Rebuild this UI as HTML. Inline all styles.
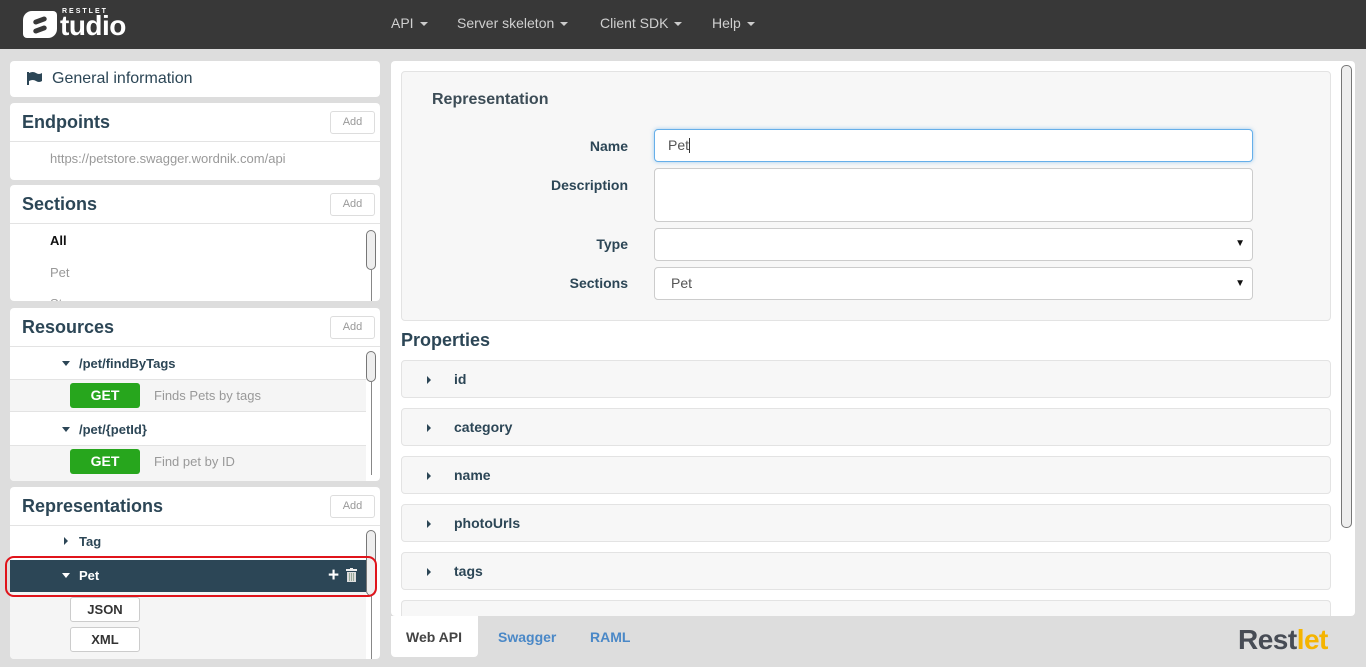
<!DOCTYPE html>
<html><head><meta charset="utf-8"><style>
*{box-sizing:border-box;margin:0;padding:0}
body{width:1366px;height:667px;overflow:hidden;background:#dddddd;font-family:"Liberation Sans",Arial,sans-serif;position:relative}
.a{position:absolute}
.nav{left:0;top:0;width:1366px;height:49px;background:#383838}
.nav .m{top:15px;color:#d0d0d0;font-size:14px}
.car{display:inline-block;width:0;height:0;border-left:4px solid transparent;border-right:4px solid transparent;border-top:4px solid #ccc;vertical-align:middle;margin-left:6px}
.pan{background:#fff;border-radius:4px;left:10px;width:370px;overflow:hidden}
.ph{position:absolute;left:12px;top:9px;font-size:18px;font-weight:bold;color:#2c4656}
.add{position:absolute;right:5px;top:8px;width:45px;height:23px;border:1px solid #ddd;border-radius:3px;color:#999;font-size:11px;text-align:center;line-height:21px}
.hr{position:absolute;left:0;right:0;height:1px;background:#e3e3e3}
.sb{position:absolute;width:10px;border:1px solid #777;border-radius:5px;background:#eee}
.sl{position:absolute;width:1px;background:#888}
.tri{display:inline-block;width:0;height:0;border-top:4px solid transparent;border-bottom:4px solid transparent;border-left:4px solid #2c4656}
.trid{display:inline-block;width:0;height:0;border-left:4px solid transparent;border-right:4px solid transparent;border-top:5px solid #2c4656}
.get{position:absolute;left:60px;width:70px;height:25px;background:#27a61d;border-radius:3px;color:#fff;font-weight:bold;font-size:14px;text-align:center;line-height:25px}
.lbl{position:absolute;font-size:14px;font-weight:bold;color:#2c4656;text-align:right;width:200px;left:428px}
.inp{position:absolute;left:654px;width:599px;background:#fff;border:1px solid #ccc;border-radius:4px;font-size:14px;color:#555;padding-left:13px}
.prow{position:absolute;left:401px;width:930px;height:38px;background:#f7f7f7;border:1px solid #e3e3e3;border-radius:4px}
.prow .tri{position:absolute;left:25px;top:15px}
.prow span{position:absolute;left:52px;top:10px;font-size:14px;font-weight:bold;color:#2c4656}
.fmt{position:absolute;left:60px;width:70px;height:25px;border:1px solid #ccc;border-radius:3px;background:#fff;text-align:center;line-height:23px;font-size:13px;font-weight:bold;color:#333}
</style></head><body>
<div class="a nav">
  <div class="a" style="left:23px;top:11px;width:34px;height:27px;background:#fff;border-radius:9px 4px 9px 4px"></div>
  <div class="a" style="left:33px;top:18px;width:14px;height:5px;background:#383838;border-radius:3px;transform:rotate(-20deg)"></div>
  <div class="a" style="left:33px;top:27px;width:14px;height:5px;background:#383838;border-radius:3px;transform:rotate(-20deg)"></div>
  <div class="a" style="left:62px;top:8px;color:#fff;font-size:7px;font-weight:bold;letter-spacing:2px">RESTLET</div>
  <div class="a" style="left:60px;top:10px;color:#fff;font-size:28px;font-weight:bold;letter-spacing:-0.5px">tudio</div>
  <div class="a m" style="left:391px">API<span class="car"></span></div>
  <div class="a m" style="left:457px">Server skeleton<span class="car"></span></div>
  <div class="a m" style="left:600px">Client SDK<span class="car"></span></div>
  <div class="a m" style="left:712px">Help<span class="car"></span></div>
</div>

<div class="a pan" style="top:61px;height:36px">
  <svg class="a" style="left:17px;top:11px" width="16" height="13" viewBox="0 0 16 13"><rect x="0" y="0" width="2" height="13" fill="#2c4656"/><path d="M2 1 Q6 -1 9 1 T15 1 V9 Q12 11 9 9 T2 9Z" fill="#2c4656"/></svg>
  <div class="a" style="left:42px;top:9px;font-size:16px;color:#2c4656">General information</div>
</div>

<div class="a pan" style="top:103px;height:77px">
  <div class="ph">Endpoints</div><div class="add">Add</div>
  <div class="hr" style="top:38px"></div>
  <div class="a" style="left:40px;top:48px;font-size:13px;color:#999">https://petstore.swagger.wordnik.com/api</div>
</div>

<div class="a pan" style="top:185px;height:116px">
  <div class="ph">Sections</div><div class="add">Add</div>
  <div class="hr" style="top:38px"></div>
  <div class="a" style="left:40px;top:48px;font-size:13px;font-weight:bold;color:#111">All</div>
  <div class="a" style="left:40px;top:80px;font-size:13px;color:#999">Pet</div>
  <div class="a" style="left:40px;top:111px;font-size:13px;color:#999">St</div>
  <div class="sb" style="left:356px;top:45px;height:40px"></div>
  <div class="sl" style="left:361px;top:85px;height:31px"></div>
</div>

<div class="a pan" style="top:308px;height:173px">
  <div class="ph">Resources</div><div class="add">Add</div>
  <div class="hr" style="top:38px"></div>
  <div class="a" style="left:52px;top:48px;font-size:13px;font-weight:bold;color:#2c4656"><span class="trid" style="margin-right:9px;vertical-align:2px"></span>/pet/findByTags</div>
  <div class="a" style="left:0;top:71px;width:356px;height:33px;background:#f5f5f5;border-top:1px solid #e3e3e3;border-bottom:1px solid #e3e3e3"></div>
  <div class="get" style="top:75px">GET</div>
  <div class="a" style="left:144px;top:80px;font-size:13px;color:#999">Finds Pets by tags</div>
  <div class="a" style="left:52px;top:114px;font-size:13px;font-weight:bold;color:#2c4656"><span class="trid" style="margin-right:9px;vertical-align:2px"></span>/pet/{petId}</div>
  <div class="a" style="left:0;top:137px;width:356px;height:36px;background:#f5f5f5;border-top:1px solid #e3e3e3"></div>
  <div class="get" style="top:141px">GET</div>
  <div class="a" style="left:144px;top:146px;font-size:13px;color:#999">Find pet by ID</div>
  <div class="sb" style="left:356px;top:43px;height:31px"></div>
  <div class="sl" style="left:361px;top:74px;height:93px"></div>
</div>

<div class="a pan" style="top:487px;height:172px">
  <div class="ph">Representations</div><div class="add">Add</div>
  <div class="hr" style="top:38px"></div>
  <div class="a" style="left:54px;top:47px;font-size:13px;font-weight:bold;color:#2c4656"><span class="tri" style="margin-right:11px;vertical-align:1px"></span>Tag</div>
  <div class="a" style="left:0;top:73px;width:356px;height:32px;background:#2c4656"></div>
  <div class="a" style="left:52px;top:81px;font-size:13px;font-weight:bold;color:#fff"><span class="trid" style="border-top-color:#fff;margin-right:9px;vertical-align:2px"></span>Pet</div>
  <div class="a" style="left:318px;top:78px;color:#fff;font-size:19px;font-weight:bold">+</div>
  <svg class="a" style="left:336px;top:81px" width="11" height="14" viewBox="0 0 11 14"><rect x="0" y="1" width="11" height="2" fill="#eee"/><rect x="4" y="0" width="3" height="2" fill="#eee"/><rect x="1" y="4" width="9" height="10" fill="#ddd"/><rect x="3" y="5" width="1" height="8" fill="#9a9"/><rect x="5" y="5" width="1" height="8" fill="#9a9"/><rect x="7" y="5" width="1" height="8" fill="#9a9"/></svg>
  <div class="a" style="left:0;top:105px;width:356px;height:67px;background:#f5f5f5"></div>
  <div class="fmt" style="top:110px">JSON</div>
  <div class="fmt" style="top:140px">XML</div>
  <div class="sb" style="left:356px;top:43px;height:66px"></div>
  <div class="sl" style="left:361px;top:109px;height:63px"></div>
</div>
<div class="a" style="left:5px;top:556px;width:372px;height:41px;border:2px solid #e0141b;border-radius:9px"></div>

<div class="a" style="left:391px;top:61px;width:964px;height:555px;background:#fff;border-radius:4px"></div>
<div class="a" style="left:401px;top:71px;width:930px;height:250px;background:#f7f7f7;border:1px solid #e3e3e3;border-radius:4px"></div>
<div class="a" style="left:432px;top:91px;font-size:16px;font-weight:bold;color:#3c4c56">Representation</div>
<div class="lbl" style="top:138px">Name</div>
<div class="lbl" style="top:177px">Description</div>
<div class="lbl" style="top:236px">Type</div>
<div class="lbl" style="top:275px">Sections</div>
<div class="inp" style="top:129px;height:33px;line-height:31px;border-color:#66afe9;box-shadow:0 0 4px rgba(102,175,233,.6)">Pet<span style="display:inline-block;width:1px;height:15px;background:#333;vertical-align:-3px"></span></div>
<div class="inp" style="top:168px;height:54px"></div>
<div class="inp" style="top:228px;height:33px"><span class="a" style="right:7px;top:9px;font-size:10px;color:#111">▼</span></div>
<div class="inp" style="top:267px;height:33px;line-height:31px;padding-left:16px">Pet<span class="a" style="right:7px;top:0;font-size:10px;color:#111">▼</span></div>
<div class="a" style="left:401px;top:330px;font-size:18px;font-weight:bold;color:#2c4656">Properties</div>
<div class="prow" style="top:360px"><i class="tri"></i><span>id</span></div>
<div class="prow" style="top:408px"><i class="tri"></i><span>category</span></div>
<div class="prow" style="top:456px"><i class="tri"></i><span>name</span></div>
<div class="prow" style="top:504px"><i class="tri"></i><span>photoUrls</span></div>
<div class="prow" style="top:552px"><i class="tri"></i><span>tags</span></div>
<div class="prow" style="top:600px;height:16px;border-bottom:none;border-radius:4px 4px 0 0"></div>
<div class="sb" style="left:1341px;top:65px;height:463px;width:11px"></div>

<div class="a" style="left:391px;top:616px;width:87px;height:41px;background:#fff;border-radius:0 0 4px 4px"></div>
<div class="a" style="left:406px;top:629px;font-size:14px;font-weight:bold;color:#444">Web API</div>
<div class="a" style="left:498px;top:629px;font-size:14px;font-weight:bold;color:#4a88c7">Swagger</div>
<div class="a" style="left:590px;top:629px;font-size:14px;font-weight:bold;color:#4a88c7">RAML</div>
<div class="a" style="left:1238px;top:624px;font-size:28px;font-weight:bold;letter-spacing:-0.5px;color:#474c55">Rest<span style="color:#f5b400">let</span></div>
</body></html>
